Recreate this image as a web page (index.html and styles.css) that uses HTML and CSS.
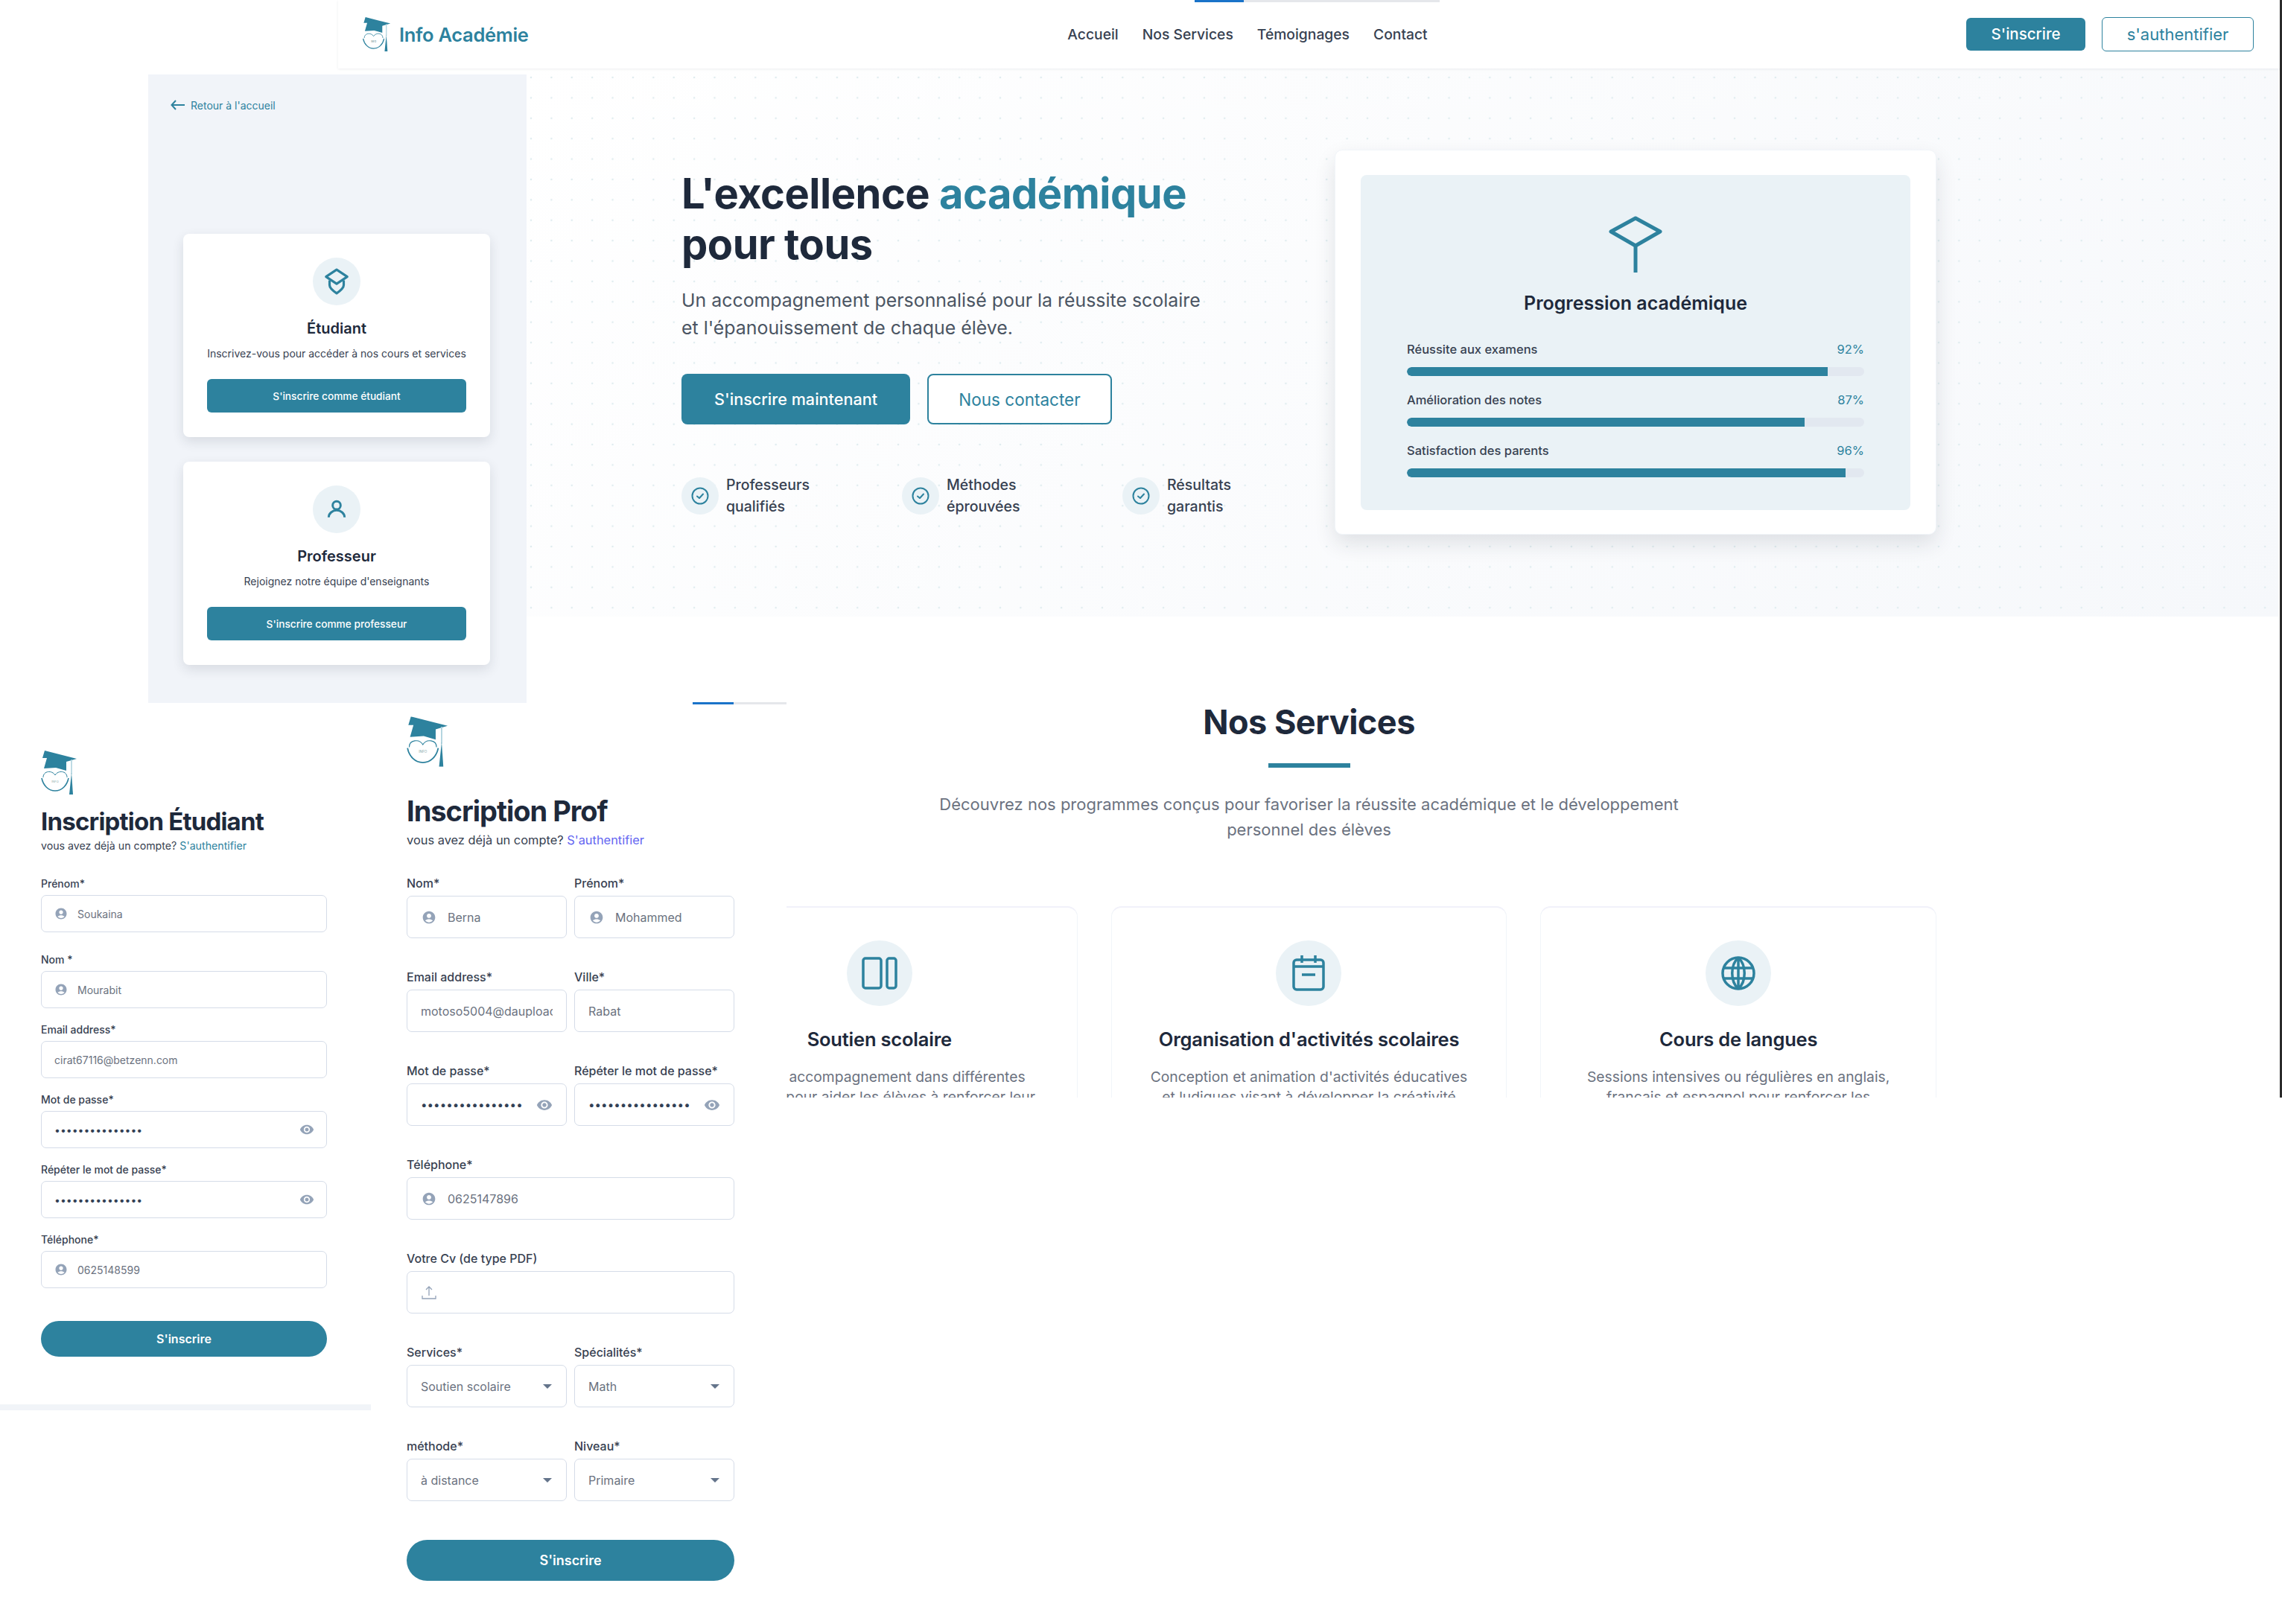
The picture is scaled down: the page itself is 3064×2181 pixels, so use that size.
FILE: index.html
```html
<!DOCTYPE html>
<html lang="fr">
<head>
	<meta charset="UTF-8">
	<title>Info Académie</title>
	<link rel="stylesheet" href="styles.css">
</head>
<body>
	<svg class="defs" width="0" height="0">
		<symbol id="logo" viewBox="0 0 48 59">
			<path d="M5 0 48 11 34 15 34 27 20 23 4 24 8 10 2 10Z" fill="#2d829e"/>
			<path d="M41 12V32" stroke="#a9cfdb" stroke-width="1.5"/>
			<path d="M41 30 43 59H38Z" fill="#2d829e"/>
			<path d="M1 37C3 47 10 54 19 54S35 47 37 37" fill="none" stroke="#2d829e" stroke-width="1.6"/>
			<path d="M3 36C3 27 15 26 19 33 23 26 35 27 35 36" fill="none" stroke="#2d829e" stroke-width="1"/>
		</symbol>
		<symbol id="person" viewBox="0 0 24 24">
			<path fill="#94a3b8" d="M12 2C6.48 2 2 6.48 2 12s4.48 10 10 10 10-4.48 10-10S17.52 2 12 2m0 4c1.93 0 3.5 1.57 3.5 3.5S13.93 13 12 13s-3.5-1.57-3.5-3.5S10.07 6 12 6m0 14c-2.03 0-4.43-.82-6.14-2.88C7.55 15.8 9.68 15 12 15s4.45.8 6.14 2.12C16.43 19.18 14.03 20 12 20"/>
		</symbol>
		<symbol id="eye" viewBox="0 0 24 24">
			<path fill="#94a3b8" d="M12 4.5C7 4.5 2.73 7.61 1 12c1.73 4.39 6 7.5 11 7.5s9.27-3.11 11-7.5c-1.73-4.39-6-7.5-11-7.5M12 17c-2.76 0-5-2.24-5-5s2.24-5 5-5 5 2.24 5 5-2.24 5-5 5m0-8c-1.66 0-3 1.34-3 3s1.34 3 3 3 3-1.34 3-3-1.34-3-3-3"/>
		</symbol>
		<symbol id="check" viewBox="0 0 24 24">
			<circle cx="12" cy="12" r="10.5" fill="none" stroke="#2d829e" stroke-width="2"/>
			<path d="M8 12.5 11 15 16 9.5" fill="none" stroke="#2d829e" stroke-width="2" stroke-linecap="round" stroke-linejoin="round"/>
		</symbol>
	</svg>

	<div class="canvas">
		<!-- barres de progression des captures -->
		<div class="load load-a"><span></span></div>
		<div class="load load-b"><span></span></div>
		<div class="edge"></div>

		<section class="hero">
			<div class="hero-left">
				<h1>L'excellence <span>académique</span><br>pour tous</h1>
				<p class="hero-sub">Un accompagnement personnalisé pour la réussite scolaire<br>et l'épanouissement de chaque élève.</p>
				<div class="hero-btns">
					<a class="btn btn-big btn-main">S'inscrire maintenant</a>
					<a class="btn btn-big btn-line">Nous contacter</a>
				</div>
				<div class="feats">
					<div class="feat"><i><svg width="24" height="24"><use href="#check"/></svg></i><span>Professeurs<br>qualifiés</span></div>
					<div class="feat"><i><svg width="24" height="24"><use href="#check"/></svg></i><span>Méthodes<br>éprouvées</span></div>
					<div class="feat"><i><svg width="24" height="24"><use href="#check"/></svg></i><span>Résultats<br>garantis</span></div>
				</div>
			</div>
			<div class="prog-card">
				<div class="prog-in">
					<svg class="prog-icon" width="72" height="76" viewBox="0 0 72 76">
						<path d="M36 3 69 21 36 40 3 21Z" fill="none" stroke="#2d829e" stroke-width="5" stroke-linejoin="round"/>
						<path d="M36 40V76" stroke="#2d829e" stroke-width="5"/>
					</svg>
					<h3>Progression académique</h3>
					<div class="prog-row"><div class="prog-txt"><span>Réussite aux examens</span><b>92%</b></div><div class="track"><div class="fill" style="width:92%"></div></div></div>
					<div class="prog-row"><div class="prog-txt"><span>Amélioration des notes</span><b>87%</b></div><div class="track"><div class="fill" style="width:87%"></div></div></div>
					<div class="prog-row"><div class="prog-txt"><span>Satisfaction des parents</span><b>96%</b></div><div class="track"><div class="fill" style="width:96%"></div></div></div>
				</div>
			</div>
		</section>

		<header class="top">
			<a class="brand">
				<svg width="39" height="46" viewBox="0 0 48 59"><use href="#logo" width="48" height="59"/><text x="19" y="43" class="logo-txt">INFO</text></svg>
				<span>Info Académie</span>
			</a>
			<nav class="menu"><a>Accueil</a><a>Nos Services</a><a>Témoignages</a><a>Contact</a></nav>
			<div class="top-btns">
				<a class="btn btn-top btn-main">S'inscrire</a>
				<a class="btn btn-top btn-line btn-auth">s'authentifier</a>
			</div>
		</header>

		<aside class="choose">
			<a class="back">
				<svg width="20" height="14" viewBox="0 0 20 14"><path d="M19 7H2M7 1 1.500 7 7 13" fill="none" stroke="#2d829e" stroke-width="2"/></svg>
				Retour à l'accueil
			</a>
			<div class="role">
				<i class="role-icon"><svg width="38" height="38" viewBox="0 0 24 24" fill="none" stroke="#2d829e" stroke-width="2" stroke-linejoin="round"><path d="M12 2 21 8 12 14 3 8Z"/><path d="M6 11V15C6 18 12 22 12 22S18 18 18 15V11"/></svg></i>
				<h3>Étudiant</h3>
				<p>Inscrivez-vous pour accéder à nos cours et services</p>
				<a class="btn btn-role">S'inscrire comme étudiant</a>
			</div>
			<div class="role">
				<i class="role-icon"><svg width="32" height="32" viewBox="0 0 24 24" fill="none" stroke="#2d829e" stroke-width="2.200"><circle cx="12" cy="8" r="4"/><path d="M4 20C4 16 8 13 12 13S20 16 20 20"/></svg></i>
				<h3>Professeur</h3>
				<p>Rejoignez notre équipe d'enseignants</p>
				<a class="btn btn-role">S'inscrire comme professeur</a>
			</div>
		</aside>

		<section class="form-etu">
			<svg class="logo-etu" width="48" height="59" viewBox="0 0 48 59"><use href="#logo" width="48" height="59"/><text x="19" y="43" class="logo-txt">INFO</text></svg>
			<h2>Inscription Étudiant</h2>
			<p class="have">vous avez déjà un compte? <a>S'authentifier</a></p>
			<div class="group first"><label>Prénom*</label><div class="box"><svg width="18" height="18"><use href="#person"/></svg><input value="Soukaina"></div></div>
			<div class="group"><label>Nom *</label><div class="box"><svg width="18" height="18"><use href="#person"/></svg><input value="Mourabit"></div></div>
			<div class="group"><label>Email address*</label><div class="box"><input value="cirat67116@betzenn.com"></div></div>
			<div class="group"><label>Mot de passe*</label><div class="box"><input type="password" value="motdepasse12345"><svg width="20" height="20"><use href="#eye"/></svg></div></div>
			<div class="group"><label>Répéter le mot de passe*</label><div class="box"><input type="password" value="motdepasse12345"><svg width="20" height="20"><use href="#eye"/></svg></div></div>
			<div class="group"><label>Téléphone*</label><div class="box"><svg width="18" height="18"><use href="#person"/></svg><input value="0625148599"></div></div>
			<a class="btn btn-pill">S'inscrire</a>
		</section>

		<section class="form-prof">
			<svg class="logo-prof" width="55" height="68" viewBox="0 0 48 59"><use href="#logo" width="48" height="59"/><text x="19" y="43" class="logo-txt">INFO</text></svg>
			<h2>Inscription Prof</h2>
			<p class="have">vous avez déjà un compte? <a>S'authentifier</a></p>
			<div class="prof-grid">
				<div class="group"><label>Nom*</label><div class="box"><svg width="20" height="20"><use href="#person"/></svg><input value="Berna"></div></div>
				<div class="group"><label>Prénom*</label><div class="box"><svg width="20" height="20"><use href="#person"/></svg><input value="Mohammed"></div></div>
				<div class="group"><label>Email address*</label><div class="box"><input value="motoso5004@dauploads.com"></div></div>
				<div class="group"><label>Ville*</label><div class="box"><input value="Rabat"></div></div>
				<div class="group"><label>Mot de passe*</label><div class="box"><input type="password" value="motdepasse123456"><svg width="22" height="22"><use href="#eye"/></svg></div></div>
				<div class="group"><label>Répéter le mot de passe*</label><div class="box"><input type="password" value="motdepasse123456"><svg width="22" height="22"><use href="#eye"/></svg></div></div>
				<div class="group wide"><label>Téléphone*</label><div class="box"><svg width="20" height="20"><use href="#person"/></svg><input value="0625147896"></div></div>
				<div class="group wide"><label>Votre Cv (de type PDF)</label><div class="box"><svg width="20" height="20" viewBox="0 0 20 20" fill="none" stroke="#94a3b8" stroke-width="1.300"><path d="M10 14V2M6 6 10 2 14 6M1 14V18H19V14"/></svg></div></div>
				<div class="group"><label>Services*</label><div class="box pick"><span>Soutien scolaire</span><em></em></div></div>
				<div class="group"><label>Spécialités*</label><div class="box pick"><span>Math</span><em></em></div></div>
				<div class="group"><label>méthode*</label><div class="box pick"><span>à distance</span><em></em></div></div>
				<div class="group"><label>Niveau*</label><div class="box pick"><span>Primaire</span><em></em></div></div>
			</div>
			<a class="btn btn-pill">S'inscrire</a>
		</section>

		<section class="services">
			<div class="serv-wrap">
				<h2>Nos Services</h2>
				<div class="rule"></div>
				<p class="serv-sub">Découvrez nos programmes conçus pour favoriser la réussite académique et le développement personnel des élèves</p>
				<div class="serv-grid">
					<div class="serv">
						<i><svg width="48" height="44" viewBox="0 0 48 44" fill="none" stroke="#2d829e" stroke-width="3.500"><rect x="2" y="2" width="24" height="40" rx="3"/><rect x="34" y="2" width="12" height="40" rx="3"/></svg></i>
						<h4>Soutien scolaire</h4>
						<p>Soutien accompagnement dans différentes matières pour aider les élèves à renforcer leur</p>
					</div>
					<div class="serv">
						<i><svg width="44" height="48" viewBox="0 0 44 48" fill="none" stroke="#2d829e" stroke-width="3.500"><rect x="2" y="6" width="40" height="40" rx="4"/><path d="M13 0V10M31 0V10M2 15H42M13 26H31"/></svg></i>
						<h4>Organisation d'activités scolaires</h4>
						<p>Conception et animation d'activités éducatives et ludiques visant à développer la créativité</p>
					</div>
					<div class="serv">
						<i><svg width="46" height="46" viewBox="0 0 46 46" fill="none" stroke="#2d829e" stroke-width="3.500"><circle cx="23" cy="23" r="21"/><path d="M23 2V44M4 16H42M4 30H42M23 2C12 12 12 34 23 44M23 2C34 12 34 34 23 44"/></svg></i>
						<h4>Cours de langues</h4>
						<p>Sessions intensives ou régulières en anglais, français et espagnol pour renforcer les</p>
					</div>
				</div>
			</div>
		</section>
	</div>
</body>
</html>
```

FILE: styles.css
```css
*{box-sizing:border-box;}
body{margin:0;background:#fff;font-family:"Inter","Liberation Sans",sans-serif;color:#1e293b;}
h1,h2,h3,h4,p{margin:0;}
i,em{font-style:normal;}
.defs{position:absolute;}
.logo-txt{font-size:4px;text-anchor:middle;fill:#8aa;}

/* le fond est une planche libre : chaque capture y a sa place */
.canvas{position:relative;width:3064px;height:2181px;overflow:hidden;}
.top,.hero,.choose,.form-etu,.form-prof,.services,.load,.edge{position:absolute;}

.load{height:3px;background:#e5e7eb;}
.load span{display:block;height:100%;background:#1a73c9;}
.load-a{left:1604px;top:0;width:329px;z-index:3;}
.load-a span{width:66px;}
.load-b{left:930px;top:943px;width:126px;z-index:3;}
.load-b span{width:55px;}
.edge{left:3061px;top:0;width:3px;height:1474px;background:#2b2b2b;z-index:4;}

.btn{display:flex;align-items:center;justify-content:center;border-radius:6px;}
.btn-main,.btn-role,.btn-pill{background:#2d829e;color:#fff;}
.btn-line{background:#fff;color:#2d829e;border:2px solid #2d829e;}

/* header */
.top{left:454px;top:0;width:2610px;height:92px;padding:0 38px 0 32px;background:#fff;display:flex;align-items:center;justify-content:space-between;box-shadow:0 1px 3px rgba(30,41,59,.08);z-index:2;}
.brand{display:flex;align-items:center;gap:11px;width:224px;font-size:25.500px;font-weight:600;color:#2d829e;letter-spacing:-.3px;white-space:nowrap;}
.menu{display:flex;gap:32px;font-size:19.300px;font-weight:500;color:#374151;}
.top-btns{display:flex;gap:22px;}
.btn-top{height:44px;width:160px;font-size:20.500px;font-weight:500;}
.btn-auth{height:46px;width:204px;margin-top:-1px;border-width:1.5px;font-size:22px;font-weight:400;}

/* hero */
.hero{left:707px;top:92px;width:2352px;height:736px;padding:109px 0 0 208px;display:flex;
	background:radial-gradient(circle,#dfecef 1.2px,transparent 1.6px) -7.700px -1.700px/27.400px 27.400px,linear-gradient(135deg,#fff,#f6f8fb);}
.hero-left{width:877px;flex:none;padding-top:25px;}
h1{font-size:56px;line-height:68px;font-weight:700;letter-spacing:-.5px;color:#1e293b;}
h1 span{color:#2d829e;}
.hero-sub{margin-top:23px;font-size:24.900px;line-height:37px;color:#4b5563;}
.hero-btns{display:flex;gap:23px;margin-top:43px;}
.btn-big{height:68px;font-size:21.600px;font-weight:500;border-radius:8px;}
.btn-big.btn-main{width:307px;}
.btn-big.btn-line{width:248px;font-size:22.500px;font-weight:400;}
.feats{display:flex;margin-top:66px;width:900px;}
.feat{width:296px;flex:none;display:flex;align-items:center;gap:10px;font-size:19.500px;line-height:29px;font-weight:500;color:#374151;}
.feat span{padding-top:1px;}
.feat i{width:50px;height:50px;border-radius:50%;background:#eaf2f6;display:flex;align-items:center;justify-content:center;}
.feat svg{display:block;}

.prog-card{width:808px;height:517px;padding:33px 34px;background:#fff;border-radius:10px;border:1px solid #f1f5f9;box-shadow:0 12px 28px rgba(30,41,59,.12);}
.prog-in{height:450px;padding:55px 62px 0;background:#eaf2f6;border-radius:8px;text-align:center;}
.prog-icon{display:block;margin:0 auto;}
.prog-in h3{margin:25px 0 34px;font-size:25px;line-height:32px;font-weight:600;color:#1e293b;}
.prog-row{margin-bottom:20px;}
.prog-txt{display:flex;justify-content:space-between;font-size:16.500px;line-height:24px;font-weight:500;color:#374151;margin-bottom:12px;}
.prog-txt b{font-weight:400;color:#2d829e;}
.track{height:12px;border-radius:6px;background:#e2e8f0;overflow:hidden;}
.fill{height:100%;background:#2d829e;border-radius:6px 0 0 6px;}

/* choix du profil */
.choose{left:199px;top:100px;width:508px;height:844px;background:#f1f4f9;padding:30px 49px 0 47px;z-index:1;}
.back{display:flex;align-items:center;gap:7px;height:22px;margin-left:-17px;font-size:14px;color:#2d829e;}
.role{height:273px;margin-bottom:33px;padding:32px 32px 0;background:#fff;border-radius:8px;box-shadow:0 6px 16px rgba(30,41,59,.12);text-align:center;}
.back + .role{margin-top:162px;}
.role-icon{display:flex;align-items:center;justify-content:center;width:64px;height:64px;margin:0 auto;border-radius:50%;background:#eaf2f6;}
.role h3{margin-top:17px;font-size:20px;line-height:28px;font-weight:600;color:#1e293b;}
.role p{margin-top:10px;font-size:14px;line-height:20px;color:#374151;white-space:nowrap;}
.btn-role{height:45px;margin-top:24px;font-size:13.700px;font-weight:500;}

/* formulaires */
.form-etu{left:0;top:944px;width:498px;height:950px;padding:64px 59px 0 55px;border-bottom:8px solid #f1f4f8;background:#fff;}
.form-prof{left:498px;top:944px;width:558px;height:1237px;padding:18px 70px 0 48px;background:#fff;}
.form-etu svg,.form-prof svg{display:block;flex:none;}
.logo-etu{margin-bottom:16px;}
.logo-prof{margin-bottom:36px;}
h2{font-weight:700;color:#1e293b;}
.form-etu h2{font-size:33px;line-height:40px;letter-spacing:-.8px;}
.form-prof h2{font-size:38px;line-height:46px;letter-spacing:-1px;}
.have{color:#374151;}
.form-etu .have{margin-top:3px;font-size:14.200px;line-height:20px;}
.form-prof .have{margin-top:4px;font-size:16.400px;line-height:24px;}
.form-etu .have a{color:#2d829e;}
.form-prof .have a{color:#6366f1;}

label{display:block;font-weight:500;color:#374151;white-space:nowrap;}
.box{display:flex;align-items:center;background:#fff;border:1.500px solid #d5dce8;border-radius:7px;}
.box input{flex:1;width:100%;min-width:0;border:0;outline:0;padding:0;background:none;font:inherit;color:#6b7280;}
.box input[type=password]{color:#334155;}

.form-etu .group{margin-top:19px;}
.form-etu .group.first{margin-top:31px;margin-bottom:27px;}
.form-etu .group.first + .group{margin-top:0;}
.form-etu label{height:20px;line-height:20px;margin-bottom:5px;font-size:14px;}
.form-etu .box{height:50px;padding:0 16px 0 17px;gap:13px;font-size:14px;}
.btn-pill{border-radius:30px;font-weight:600;}
.form-etu .btn-pill{height:48px;margin-top:44px;font-size:16px;}

.prof-grid{display:grid;grid-template-columns:215px 215px;column-gap:10px;row-gap:41px;margin-top:35px;}
.wide{grid-column:span 2;}
.form-prof label{height:22px;line-height:22px;margin-bottom:6px;font-size:16px;}
.form-prof .box{height:57px;padding:0 18px;gap:15px;font-size:16px;}
.form-prof .box > svg:first-child{margin-left:1px;}
.form-prof .box input[type=password]{font-size:15.200px;}
.pick{justify-content:space-between;color:#6b7280;}
.pick em{width:0;height:0;border:6px solid transparent;border-top:6px solid #64748b;border-bottom:0;margin-right:1px;}
.form-prof .btn-pill{height:55px;margin-top:52px;font-size:18px;}

/* services */
.services{left:1056px;top:938px;width:2005px;height:536px;padding-top:4px;overflow:hidden;background:#fff;}
.serv-wrap{width:1685px;margin-left:-141px;text-align:center;}
.serv-wrap h2{font-size:45px;line-height:56px;letter-spacing:-.5px;}
.rule{width:110px;height:6px;margin:27px auto 0;background:#2d829e;}
.serv-sub{width:1040px;margin:32px auto 0;font-size:22px;line-height:34px;color:#6b7280;}
.serv-grid{display:grid;grid-template-columns:repeat(3,1fr);gap:45px;margin-top:86px;}
.serv{height:420px;padding:44px 45px 0;border:1px solid #f1f5f9;border-top:2px solid #f1f1fa;border-radius:14px;background:#fff;}
.serv i{display:flex;align-items:center;justify-content:center;width:88px;height:88px;margin:0 auto;border-radius:50%;background:#eaf2f6;}
.serv h4{margin-top:28px;font-size:25.500px;line-height:34px;font-weight:600;color:#1e293b;letter-spacing:-.2px;}
.serv p{margin-top:20px;font-size:19.300px;line-height:27px;color:#6b7280;}
```
